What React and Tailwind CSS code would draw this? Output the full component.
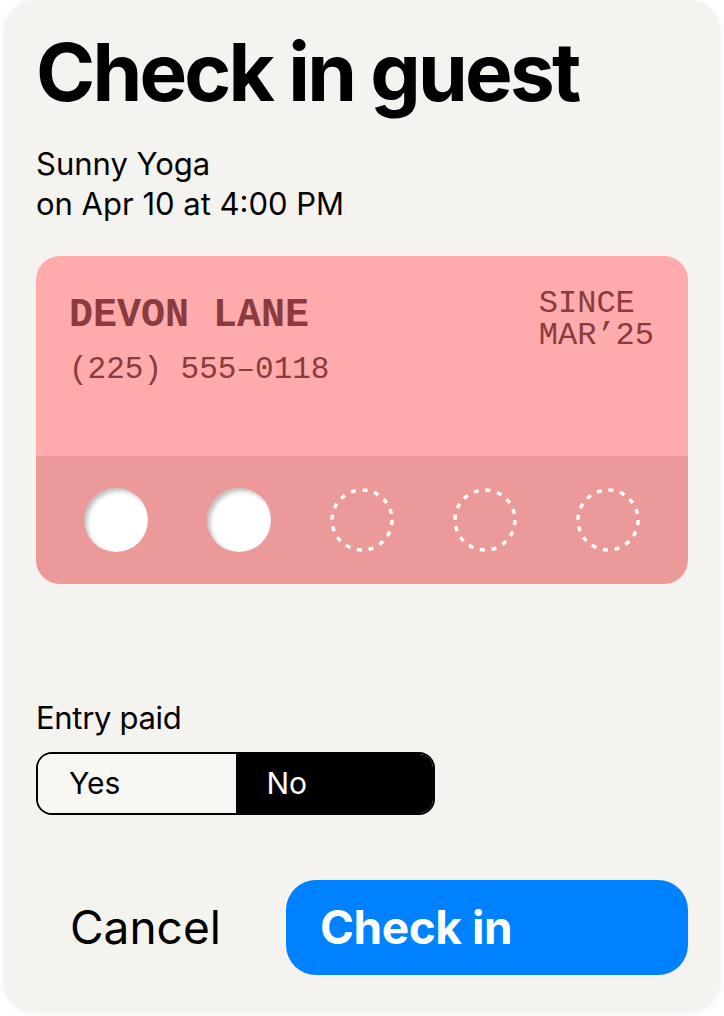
import React from 'react';

const sans = { fontFamily: 'Inter, "Noto Sans", sans-serif' };
const mono = { fontFamily: '"Liberation Mono", "DejaVu Sans Mono", monospace' };

function Hole({ punched }) {
  if (punched) {
    return (
      <div className="w-16 h-16 rounded-full bg-white shadow-[inset_3px_3px_4px_rgba(0,0,0,0.25)]" />
    );
  }
  return (
    <svg width="64" height="64" viewBox="0 0 64 64">
      <circle cx="32" cy="32" r="30" fill="none" stroke="white" strokeWidth="3.5" strokeDasharray="5 6.8" />
    </svg>
  );
}

export default function App() {
  const visits = [true, true, false, false, false];
  return (
    <div className="min-h-screen bg-white px-1" style={sans}>
      <div className="h-[1012px] rounded-[32px] bg-[#f4f3ef] shadow-[0_1px_6px_rgba(0,0,0,0.08)] px-8 pt-[30px] flex flex-col">
        <h1 className="text-[80px] leading-[84px] font-bold tracking-[-0.035em] text-black">
          Check in guest
        </h1>
        <div className="mt-[30px] text-[31px] leading-[40px] text-black">
          <div>Sunny Yoga</div>
          <div>on Apr 10 at 4:00 PM</div>
        </div>

        {/* Punch card */}
        <div className="mt-[32px] rounded-[24px] overflow-hidden" style={mono}>
          <div className="h-[200px] bg-[#ffaaab] flex justify-between pl-[33px] pr-[34px] pt-[38px] text-[#8b3a3e]">
            <div>
              <div className="text-[40px] leading-[44px] font-bold">DEVON LANE</div>
              <div className="mt-[14px] text-[31px] leading-[36px]">(225) 555–0118</div>
            </div>
            <p className="text-[32px] leading-[32px] -mt-[6px] pl-4">
              SINCE
              <br />
              MAR’25
            </p>
          </div>
          <div className="h-[128px] bg-[#ec999a] flex items-center justify-between px-12">
            {visits.map((v, i) => (
              <Hole key={i} punched={v} />
            ))}
          </div>
        </div>

        <div className="mt-[116px] text-[31px] leading-[36px] tracking-[-0.01em] text-black">Entry paid</div>
        <div className="mt-[16px] w-[399px] h-[63px] rounded-[16px] border-2 border-black overflow-hidden flex text-[30px]">
          <div className="w-1/2 bg-[#f8f7f4] flex items-center pl-[31px] text-black">Yes</div>
          <div className="w-1/2 bg-black flex items-center pl-[31px] text-white">No</div>
        </div>

        <div className="mt-[65px] flex items-center">
          <button className="w-[250px] h-[95px] text-left pl-[34px] text-[46px] text-black">Cancel</button>
          <button className="flex-1 h-[95px] rounded-[30px] bg-[#0081ff] text-left pl-[34px] text-[46px] font-bold tracking-[-0.01em] text-white">
            Check in
          </button>
        </div>
      </div>
    </div>
  );
}
